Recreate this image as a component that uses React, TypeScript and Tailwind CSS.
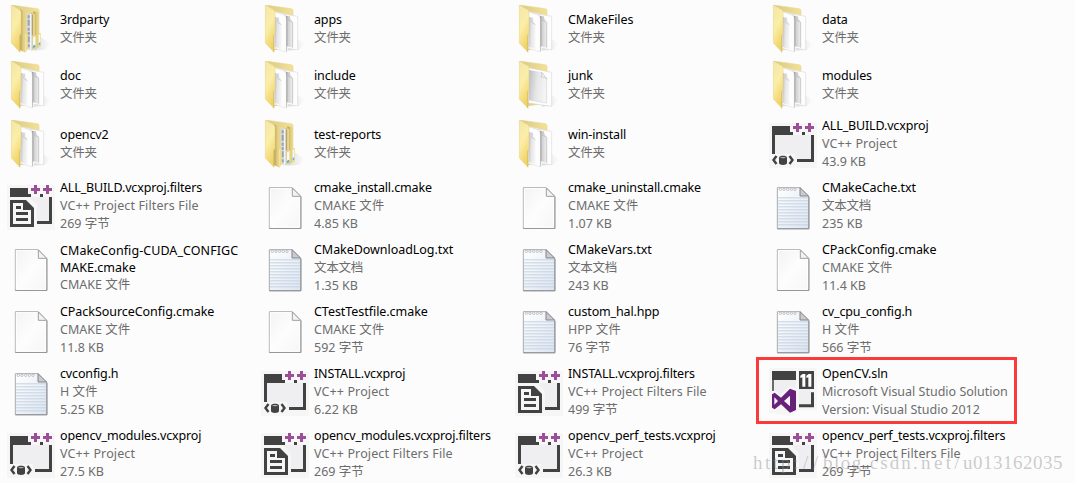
import React from 'react';

type Kind = 'folder' | 'folderOne' | 'folderFull' | 'blank' | 'note' | 'proj' | 'filters' | 'sln';
type Entry = { kind: Kind; name: string[]; info: string[]; marked?: boolean };

const dir = (name: string, kind: Kind = 'folder'): Entry => ({ kind, name: [name], info: ['文件夹'] });
const file = (kind: Kind, name: string, type: string, size: string): Entry => ({ kind, name: [name], info: [type, size] });

const VC = 'VC++ Project';
const VF = 'VC++ Project Filters File';

const entries: Entry[] = [
  dir('3rdparty', 'folderFull'), dir('apps'), dir('CMakeFiles'), dir('data'),
  dir('doc'), dir('include'), dir('junk', 'folderOne'), dir('modules'),
  dir('opencv2'), dir('test-reports', 'folderFull'), dir('win-install'), file('proj', 'ALL_BUILD.vcxproj', VC, '43.9 KB'),
  file('filters', 'ALL_BUILD.vcxproj.filters', VF, '269 字节'),
  file('blank', 'cmake_install.cmake', 'CMAKE 文件', '4.85 KB'),
  file('blank', 'cmake_uninstall.cmake', 'CMAKE 文件', '1.07 KB'),
  file('note', 'CMakeCache.txt', '文本文档', '235 KB'),
  { kind: 'blank', name: ['CMakeConfig-CUDA_CONFIGC', 'MAKE.cmake'], info: ['CMAKE 文件'] },
  file('note', 'CMakeDownloadLog.txt', '文本文档', '1.35 KB'),
  file('note', 'CMakeVars.txt', '文本文档', '243 KB'),
  file('blank', 'CPackConfig.cmake', 'CMAKE 文件', '11.4 KB'),
  file('blank', 'CPackSourceConfig.cmake', 'CMAKE 文件', '11.8 KB'),
  file('blank', 'CTestTestfile.cmake', 'CMAKE 文件', '592 字节'),
  file('note', 'custom_hal.hpp', 'HPP 文件', '76 字节'),
  file('note', 'cv_cpu_config.h', 'H 文件', '566 字节'),
  file('note', 'cvconfig.h', 'H 文件', '5.25 KB'),
  file('proj', 'INSTALL.vcxproj', VC, '6.22 KB'),
  file('filters', 'INSTALL.vcxproj.filters', VF, '499 字节'),
  { kind: 'sln', name: ['OpenCV.sln'], info: ['Microsoft Visual Studio Solution', 'Version: Visual Studio 2012'], marked: true },
  file('proj', 'opencv_modules.vcxproj', VC, '27.5 KB'),
  file('filters', 'opencv_modules.vcxproj.filters', VF, '269 字节'),
  file('proj', 'opencv_perf_tests.vcxproj', VC, '26.3 KB'),
  file('filters', 'opencv_perf_tests.vcxproj.filters', VF, '269 字节'),
];

function Gradients() {
  return (
    <svg className="absolute size-0" aria-hidden="true">
      <defs>
        <linearGradient id="flap" x1="0" y1="0" x2="0.35" y2="1">
          <stop offset="0" stopColor="#f3e6a8" />
          <stop offset="0.5" stopColor="#fbeea8" />
          <stop offset="1" stopColor="#f1d366" />
        </linearGradient>
        <linearGradient id="back" x1="0" y1="0" x2="1" y2="0">
          <stop offset="0" stopColor="#d9c987" />
          <stop offset="1" stopColor="#f4e193" />
        </linearGradient>
        <linearGradient id="sheet" x1="0" y1="0" x2="1" y2="0.2">
          <stop offset="0" stopColor="#bdbdbf" />
          <stop offset="0.5" stopColor="#e6e6e8" />
          <stop offset="1" stopColor="#f4f4f5" />
        </linearGradient>
        <linearGradient id="gap" x1="0" y1="0" x2="1" y2="0">
          <stop offset="0" stopColor="#949495" />
          <stop offset="0.35" stopColor="#d2d2d3" />
          <stop offset="1" stopColor="#efeff0" />
        </linearGradient>
        <linearGradient id="shade" x1="0" y1="0" x2="1" y2="0">
          <stop offset="0" stopColor="#c9c9c9" />
          <stop offset="1" stopColor="#fcfcfc" />
        </linearGradient>
        <linearGradient id="sub" x1="0" y1="0" x2="1" y2="0">
          <stop offset="0" stopColor="#b3a05c" />
          <stop offset="0.45" stopColor="#e4cf80" />
          <stop offset="1" stopColor="#f0dd92" />
        </linearGradient>
        <linearGradient id="paper" x1="0" y1="0" x2="1" y2="1">
          <stop offset="0" stopColor="#f3f3f3" />
          <stop offset="0.5" stopColor="#fdfdfd" />
          <stop offset="1" stopColor="#f6f6f6" />
        </linearGradient>
        <linearGradient id="pad" x1="0" y1="0" x2="1" y2="1">
          <stop offset="0" stopColor="#ffffff" />
          <stop offset="1" stopColor="#dde4f0" />
        </linearGradient>
      </defs>
    </svg>
  );
}

function FolderIcon({ kind }: { kind: Kind }) {
  return (
    <svg viewBox="21 15 144 144" className="size-12 shrink-0">
      <path d="M120 110L152 132L136 149L100 152Z" fill="url(#shade)" opacity="0.6" />
      <path d="M35 15L112 26Q117 27 117 32V140L60 150Z" fill="url(#back)" stroke="#e3d28d" strokeWidth="1.5" />
      {kind === 'folder' && (
        <>
          <path d="M60 34L116 46V140L60 146Z" fill="#e9e9ea" />
          <path d="M94 43L131 49V150L94 143Z" fill="#fdfdfd" stroke="#d2d2d2" strokeWidth="1.5" />
          <path d="M96 47L106 49L116 66V143L96 138Z" fill="url(#gap)" />
          <path d="M106 49L104 62Q111 62 116 67V143" fill="none" stroke="#b4b4b6" strokeWidth="2" />
          <path d="M61 35L90 45Q97 49 97 60V156L61 145Z" fill="#fdfdfd" stroke="#dadada" strokeWidth="1.5" />
          <path d="M62 50L73 53L82 73V148L62 141Z" fill="url(#sheet)" />
          <path d="M73 53L71 67L82 74" fill="none" stroke="#bebebe" strokeWidth="2" />
          <path d="M97.500 54V154" stroke="#b0b0b1" strokeWidth="2" />
        </>
      )}
      {kind === 'folderOne' && (
        <>
          <path d="M61 35L131 49V151L61 141Z" fill="#fdfdfd" stroke="#cfcfcf" strokeWidth="1.5" />
          <path d="M63 42L101 49L116 69V141L63 132Z" fill="url(#sheet)" />
          <path d="M116 69V141L63 132" fill="none" stroke="#cdcdcd" strokeWidth="1.5" />
          <path d="M101 49Q104 57 99 63Q111 61 117 69Z" fill="#fafafa" stroke="#a6a6a6" strokeWidth="1.5" />
        </>
      )}
      {kind === 'folderFull' && (
        <>
          <path d="M100 34L116 37V98L123 100V139L104 148Z" fill="url(#sub)" />
          <path d="M116 104L121 102V134L116 137Z" fill="#f8f8f5" />
          <path d="M116 129L121 127V134L116 136Z" fill="#69ade8" />
          <path d="M94 38L105 43V104L109 107V142L97 151L90 146Z" fill="url(#sub)" />
          <path d="M99 112L106 109V140L99 145Z" fill="#f8f8f5" />
          <path d="M99 137L106 134V141L99 145Z" fill="#5da6e8" />
          <path d="M79 38L97 42V152L79 147Z" fill="#d9d9d9" />
          <path d="M92 42V150" stroke="#f3f3f3" strokeWidth="4" />
          <path d="M97 44V106" stroke="#8c8058" strokeWidth="2" />
          <path d="M86 46V142" stroke="#97a3af" strokeWidth="6" strokeDasharray="9 4 18 6 9 4" />
          <path d="M60 28L79 37V98L83 101V148L76 158L60 150Z" fill="url(#sub)" />
          <path d="M77 102V156" stroke="#f6e7a4" strokeWidth="3" />
        </>
      )}
      <path d="M35 15L60 30Q63 32 63 37V100L60 105V157L34 129V20Z" fill="url(#flap)" stroke="#e6d282" strokeWidth="1.5" />
      <path d="M62 104L59 108V156" fill="none" stroke="#cfb868" strokeWidth="2" />
    </svg>
  );
}

function BlankIcon() {
  return (
    <svg viewBox="21 186 144 144" className="size-12 shrink-0">
      <path d="M46 203H115L140 229V325H46Z" fill="url(#paper)" stroke="#b0b0b0" strokeWidth="3" />
      <path d="M49 206H113L137 231V322H49Z" fill="none" stroke="#fff" strokeWidth="3" />
      <path d="M46 325.500H141V230" fill="none" stroke="#979797" strokeWidth="3" />
      <path d="M115 204V229H140Z" fill="#f3f3f3" stroke="#a0a0a0" strokeWidth="3" />
    </svg>
  );
}

function NoteIcon() {
  return (
    <svg viewBox="21 372 144 144" className="size-12 shrink-0">
      <path d="M46 389H114L140 416V512H46Z" fill="url(#pad)" stroke="#a9acb0" strokeWidth="3" />
      <path d="M48 419.500H138M48 428.500H138M48 437.500H138M48 446.500H138M48 455.500H138M48 464.500H138M48 473.500H138M48 482.500H138M48 491.500H138M48 500.500H138" stroke="#c3d3e2" strokeWidth="3" />
      <path d="M46 512.500H141V416" fill="none" stroke="#8b8e93" strokeWidth="3" />
      <path d="M114 389V414H140Z" fill="#c9cbce" stroke="#83868a" strokeWidth="3" />
      <g fill="#fff" stroke="#a4a4a4" strokeWidth="2">
        <circle cx="55" cy="394" r="3.500" />
        <circle cx="66" cy="394" r="3.500" />
        <circle cx="77" cy="394" r="3.500" />
        <circle cx="88" cy="394" r="3.500" />
        <circle cx="99" cy="394" r="3.500" />
      </g>
    </svg>
  );
}

function ProjectIcon({ filters }: { filters: boolean }) {
  return (
    <svg viewBox="0 0 48 48" className="size-12 shrink-0">
      <path d="M0 3H48V48H0Z" fill="#f6f6f6" />
      <path d="M6 15H42V39H6Z" fill="#efeff2" />
      <path d="M3 6H21V12H24V15H3ZM33 12H36V15H33Z" fill="#424242" />
      <path d="M42 15H45V42H28V39H42Z" fill="#424242" />
      <path d="M27 3H30V6H33V9H30V12H27V9H24V6H27ZM39 3H42V6H45V9H42V12H39V9H36V6H39Z" fill="#9b4f96" />
      {filters ? (
        <>
          <path d="M0 15H22L30 23V48H0Z" fill="#f6f6f6" />
          <path fillRule="evenodd" d="M3 18H19L27 26V45H3ZM6 21V42H24V28H16V21Z" fill="#424242" />
          <path d="M9 24H14V27H9ZM9 30H21V33H9ZM9 36H21V39H9Z" fill="#424242" />
        </>
      ) : (
        <>
          <path d="M3 12H6V34H3Z" fill="#424242" />
          <path d="M0 34H26V48H0Z" fill="#f6f6f6" />
          <path d="M7.500 36L4.500 40L7.500 44M20.500 36L23.500 40L20.500 44" fill="none" stroke="#424242" strokeWidth="2.400" />
          <path d="M10 37.500C10 35 18 35 18 37.500V43C18 45.500 10 45.500 10 43Z" fill="#424242" />
          <ellipse cx="14" cy="37.600" rx="2.800" ry="0.700" fill="#b9b9b9" />
        </>
      )}
    </svg>
  );
}

function SolutionIcon() {
  return (
    <svg viewBox="57 39 144 144" className="size-12 shrink-0">
      <path d="M57 39H201V165H145L120 183L57 174Z" fill="#f6f6f6" />
      <path d="M72 75H183V148H72Z" fill="#efeff2" />
      <path d="M66 48H138V75H66ZM147 48H192V102H147ZM183 112H192V157H147V148H183Z" fill="#424242" />
      <path d="M138 40H147V165H138Z" fill="#f6f6f6" />
      <path d="M66 75H72V108H66Z" fill="#6b6b6b" />
      <path d="M151 62L158 57H166V95H157V67L151 69ZM169 62L176 57H184V95H175V67L169 69Z" fill="#fff" />
      <path d="M60 112L75 106L89 121L118 94L144 102V169L119 178L91 153L74 168L60 160Z" fill="#f6f6f6" />
      <path fillRule="evenodd" d="M66 118L74 113L93 128L120 101L138 108V165L120 173L93 148L74 163L66 158ZM73 127V149L84 138ZM120 122L102 138L120 154Z" fill="#68217a" />
    </svg>
  );
}

function Icon({ kind }: { kind: Kind }) {
  if (kind === 'blank') return <BlankIcon />;
  if (kind === 'note') return <NoteIcon />;
  if (kind === 'proj' || kind === 'filters') return <ProjectIcon filters={kind === 'filters'} />;
  if (kind === 'sln') return <SolutionIcon />;
  return <FolderIcon kind={kind} />;
}

function infoTracking(line: string) {
  if (line.startsWith('VC++')) return 'tracking-[0.12px] text-[#6d6d6d]';
  if (line === '文件夹' || line === '文本文档') return 'tracking-[-0.25px] text-[#6d6d6d]';
  return 'text-[#6d6d6d]';
}

function nameTracking(line: string) {
  if (line.startsWith('CMakeConfig')) return 'tracking-[0.07px] text-black';
  if (/^C[A-Z]/.test(line)) return 'tracking-[-0.05px] text-black';
  return 'tracking-[-0.15px] text-black';
}

function Cell({ entry }: { entry: Entry }) {
  return (
    <div className="relative flex items-center gap-[5px] pl-[7px]">
      <Icon kind={entry.kind} />
      <div className="flex flex-col whitespace-nowrap text-[12.5px] leading-[18px]">
        {entry.name.map((line, i) => (
          <span key={line} className={i > 0 ? '-my-px text-black' : nameTracking(line)}>{line}</span>
        ))}
        {entry.info.map((line) => (
          <span key={line} className={infoTracking(line)}>{line}</span>
        ))}
      </div>
      {entry.marked && <div className="absolute -left-[6px] -top-[4px] h-[67px] w-[261px] border-[3px] border-[#fc3a3c]" />}
    </div>
  );
}

export default function App() {
  return (
    <main className="relative h-[483px] w-[1075px] overflow-hidden bg-[#fcfcfc] pt-px font-['Noto_Sans','Noto_Sans_CJK_SC',sans-serif]">
      <Gradients />
      <div className="grid grid-cols-[repeat(4,254px)] grid-rows-[56px_56px_repeat(6,62px)]">
        {entries.map((entry) => (
          <Cell key={entry.name[0]} entry={entry} />
        ))}
      </div>
      <div className="absolute left-[753px] top-[452px] whitespace-nowrap font-['Liberation_Serif',serif] text-[19px] leading-[22px] text-[#8c8c8c]/45">
        <span className="tracking-[2.6px]">http</span>
        <span className="tracking-[4.7px]">://</span>
        <span className="tracking-[1.55px]">blog</span>
        <span className="tracking-[2.1px]">.csdn</span>
        <span className="tracking-[3.35px]">.net/</span>
        <span className="tracking-[0.5px]">u013162035</span>
      </div>
    </main>
  );
}
